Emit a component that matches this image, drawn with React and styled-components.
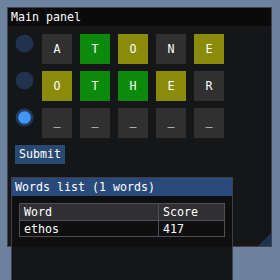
import React from "react";
import styled, { createGlobalStyle } from "styled-components";

const Global = createGlobalStyle`
  html, body {
    margin: 0;
    padding: 0;
    width: 280px;
    height: 280px;
    overflow: hidden;
    background: #6c829e;
  }
  body {
    font-family: "DejaVu Sans Mono", "Liberation Mono", monospace;
    font-size: 11.63px;
    line-height: 13px;
    color: #ffffff;
  }
`;

const Desktop = styled.div`
  position: relative;
  width: 280px;
  height: 280px;
  overflow: hidden;
`;

const Window = styled.section`
  position: absolute;
  left: ${(p) => p.$x}px;
  top: ${(p) => p.$y}px;
  width: ${(p) => p.$w}px;
  height: ${(p) => p.$h}px;
  box-sizing: border-box;
  border: 1px solid rgba(110, 110, 128, 0.5);
  background: rgba(15, 15, 15, 0.94);
  display: flex;
  flex-direction: column;
`;

const TitleBar = styled.header`
  flex: none;
  height: 18px;
  line-height: 18px;
  padding-left: 3px;
  white-space: nowrap;
  background: ${(p) => (p.$active ? "#294a7a" : "#0a0a0a")};
`;

const MainBody = styled.div`
  display: grid;
  row-gap: 7px;
  justify-items: start;
  padding: 8px 7px;
`;

const Row = styled.div`
  display: flex;
  align-items: flex-start;
  gap: 8px;
`;

const RadioBox = styled.svg`
  display: block;
  width: 19px;
  height: 19px;
  flex: none;
`;

const CELL_BG = {
  miss: "#303030",
  hit: "#0b8a0b",
  near: "#8a8a0b",
};

const Cell = styled.div`
  width: 30px;
  height: 30px;
  display: flex;
  align-items: center;
  justify-content: center;
  background: ${(p) => CELL_BG[p.$state]};
`;

const Blank = styled.span`
  position: relative;
  top: -2px;
`;

const Button = styled.button`
  height: 19px;
  padding: 0 4px;
  border: none;
  margin: 0;
  background: #274972;
  color: #ffffff;
  font: inherit;
  line-height: 19px;
`;

const Grip = styled.svg`
  position: absolute;
  right: 0;
  bottom: 0;
  width: 13px;
  height: 13px;
`;

const ListBody = styled.div`
  padding: 7px 7px;
`;

const TableGrid = styled.div`
  display: grid;
  grid-template-columns: 139px 66px;
  width: 206px;
  box-sizing: border-box;
  border-top: 1px solid #4f4f59;
  border-left: 1px solid #4f4f59;
`;

const TCell = styled.div`
  box-sizing: border-box;
  height: ${(p) => (p.$head ? 17 : 16)}px;
  line-height: 16px;
  padding: 0 4px;
  white-space: nowrap;
  border-right: 1px solid #4f4f59;
  border-bottom: 1px solid #4f4f59;
  background: ${(p) => (p.$head ? "#303033" : "transparent")};
`;

function Radio({ on }) {
  return (
    <RadioBox viewBox="0 0 19 19">
      <circle cx="9.5" cy="9.5" r="9" fill={on ? "#223a5c" : "#20324d"} />
      {on && <circle cx="9.5" cy="9.5" r="6.3" fill="#4296fa" />}
    </RadioBox>
  );
}

const rows = [
  { on: false, cells: [["A", "miss"], ["T", "hit"], ["O", "near"], ["N", "miss"], ["E", "near"]] },
  { on: false, cells: [["O", "near"], ["T", "hit"], ["H", "hit"], ["E", "near"], ["R", "miss"]] },
  { on: true, cells: [["_", "miss"], ["_", "miss"], ["_", "miss"], ["_", "miss"], ["_", "miss"]] },
];

export default function App() {
  return (
    <Desktop>
      <Global />
      <Window $x={7} $y={7} $w={265} $h={240}>
        <TitleBar>Main panel</TitleBar>
        <MainBody>
          {rows.map((r, i) => (
            <Row key={i}>
              <Radio on={r.on} />
              {r.cells.map(([ch, st], j) => (
                <Cell key={j} $state={st}>
                  {ch === "_" ? <Blank>_</Blank> : ch}
                </Cell>
              ))}
            </Row>
          ))}
          <Button>Submit</Button>
        </MainBody>
        <Grip viewBox="0 0 13 13">
          <polygon points="13,0 13,13 0,13" fill="#1e3352" />
        </Grip>
      </Window>
      <Window $x={11} $y={177} $w={222} $h={120}>
        <TitleBar $active>Words list (1 words)</TitleBar>
        <ListBody>
          <TableGrid>
            <TCell $head>Word</TCell>
            <TCell $head>Score</TCell>
            <TCell>ethos</TCell>
            <TCell>417</TCell>
          </TableGrid>
        </ListBody>
      </Window>
    </Desktop>
  );
}
